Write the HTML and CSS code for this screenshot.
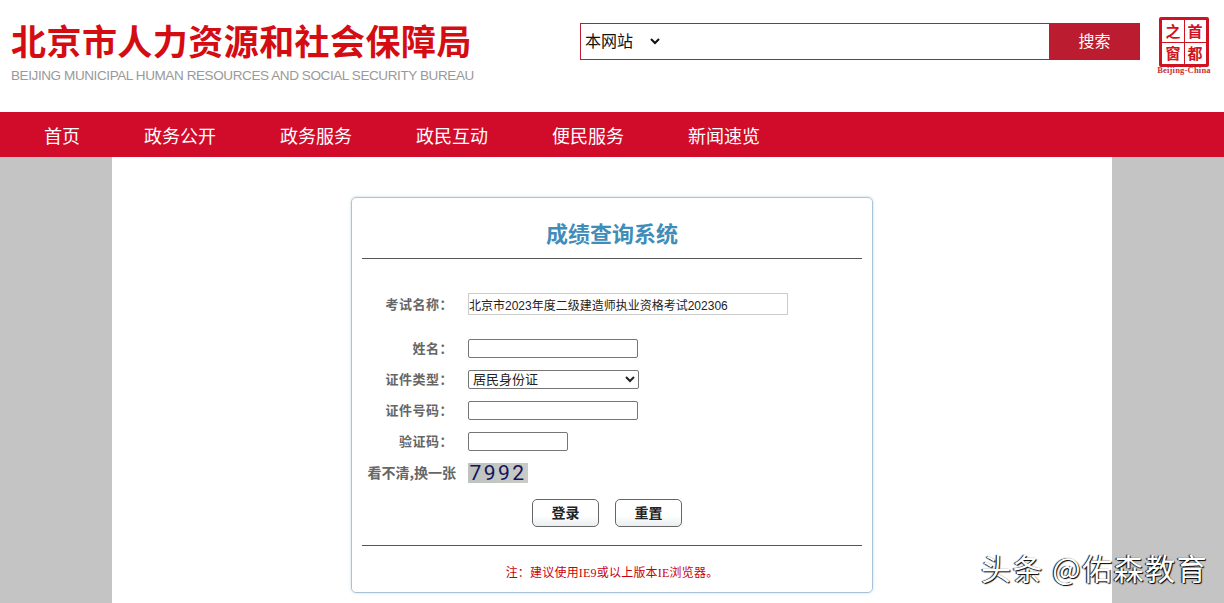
FILE: index.html
```html
<!DOCTYPE html>
<html lang="zh-CN">
  <head>
    <meta charset="UTF-8" />
    <title>成绩查询系统</title>
    <link rel="stylesheet" href="styles.css">
  </head>
  <body>
    <header class="top">
      <div class="brand">
        <div class="brand-cn">北京市人力资源和社会保障局</div>
        <div class="brand-en">BEIJING MUNICIPAL HUMAN RESOURCES AND SOCIAL SECURITY BUREAU</div>
      </div>
      <form class="search">
        <select class="search-scope">
          <option>本网站</option>
        </select>
        <input class="search-input" type="text" />
        <button class="search-btn" type="button">搜索</button>
      </form>
      <div class="seal">
        <div class="seal-box">
          <span>之</span><span>首</span><span>窗</span><span>都</span>
        </div>
        <div class="seal-en">Beijing-China</div>
      </div>
    </header>

    <nav class="nav">
      <a href="#">首页</a>
      <a href="#">政务公开</a>
      <a href="#">政务服务</a>
      <a href="#">政民互动</a>
      <a href="#">便民服务</a>
      <a href="#">新闻速览</a>
    </nav>

    <main class="page">
      <div class="column">
        <section class="card">
          <h1 class="card-title">成绩查询系统</h1>
          <form class="query">
            <div class="row row-exam">
              <label>考试名称：</label>
              <input class="exam-name" type="text" value="北京市2023年度二级建造师执业资格考试202306" readonly />
            </div>
            <div class="row">
              <label>姓名：</label>
              <input class="field" type="text" />
            </div>
            <div class="row">
              <label>证件类型：</label>
              <select class="field-select">
                <option>居民身份证</option>
              </select>
            </div>
            <div class="row">
              <label>证件号码：</label>
              <input class="field" type="text" />
            </div>
            <div class="row">
              <label>验证码：</label>
              <input class="field field-short" type="text" />
            </div>
            <div class="row row-captcha">
              <label class="refresh">看不清,换一张</label>
              <span class="captcha">7992</span>
            </div>
            <div class="actions">
              <button type="button">登录</button>
              <button type="reset">重置</button>
            </div>
          </form>
          <p class="note">注：建议使用IE9或以上版本IE浏览器。</p>
        </section>
      </div>
    </main>

    <div class="watermark">头条 @佑森教育</div>
  </body>
</html>
```

FILE: styles.css
```css
html,
body {
  margin: 0;
  height: 603px;
  overflow: hidden;
}
body {
  font-family: "Noto Sans CJK SC", "Liberation Sans", sans-serif;
  background: #fff;
}

/* header */
.top {
  display: flex;
  height: 112px;
  box-sizing: border-box;
  padding-left: 11px;
}
.brand {
  width: 569px;
  padding-top: 19px;
}
.brand-cn {
  font-size: 35px;
  line-height: 42px;
  font-weight: 700;
  color: #d40d12;
  letter-spacing: 0.45px;
  white-space: nowrap;
}
.brand-en {
  margin-top: 6px;
  font-family: "Liberation Sans", sans-serif;
  font-size: 13.5px;
  line-height: 18px;
  letter-spacing: -0.4px;
  color: #999;
  white-space: nowrap;
}
.search {
  display: flex;
  width: 560px;
  height: 37px;
  margin-top: 23px;
  box-sizing: border-box;
  border: 1px solid #bb1c2f;
  border-right: none;
}
.search-scope {
  width: 82px;
  border: none;
  background: #fff;
  font-family: "Liberation Sans", "Noto Sans CJK SC", sans-serif;
  font-size: 16px;
  color: #111;
  padding: 0;
  outline: none;
}
.search-input {
  flex: 1;
  border: none;
  outline: none;
  min-width: 0;
}
.search-btn {
  width: 91px;
  margin: -1px 0;
  padding: 0 0 4px;
  border: none;
  background: #bb1c2f;
  color: #fff;
  font-size: 16px;
  font-family: inherit;
}
.seal {
  width: 60px;
  margin-left: 14px;
  margin-top: 17px;
  text-align: center;
}
.seal-box {
  display: grid;
  grid-template-columns: 1fr 1fr;
  width: 50px;
  height: 50px;
  margin: 0 auto;
  box-sizing: border-box;
  border: 3px solid #cf1322;
  border-radius: 2px;
  background: linear-gradient(#cf1322, #cf1322) center / 1px 100% no-repeat,
    linear-gradient(#cf1322, #cf1322) center / 100% 1px no-repeat, #fff;
}
.seal-box span {
  font-size: 15px;
  line-height: 22px;
  font-weight: 700;
  color: #cf1322;
  text-align: center;
}
.seal-en {
  font-family: "Liberation Serif", serif;
  font-size: 8.5px;
  line-height: 7px;
  letter-spacing: 0.2px;
  font-weight: 700;
  color: #c9303a;
  white-space: nowrap;
}

/* nav */
.nav {
  display: flex;
  height: 45px;
  padding-left: 12px;
  background: #d10c2a;
}
.nav a {
  padding: 0 32px;
  font-size: 18px;
  line-height: 47px;
  color: #fff;
  text-decoration: none;
}

/* main */
.page {
  height: 446px;
  background: #c4c4c4;
}
.column {
  width: 1000px;
  height: 100%;
  margin: 0 auto;
  box-sizing: border-box;
  padding-top: 40px;
  background: #fff;
}
.card {
  width: 522px;
  height: 396px;
  margin-left: 239px;
  box-sizing: border-box;
  padding: 0 10px;
  border: 1px solid #a9c4da;
  border-radius: 5px;
  box-shadow: 0 0 3px #c6d6e3;
}
.card-title {
  height: 60px;
  margin: 0;
  border-bottom: 1px solid #555;
  font-size: 22px;
  line-height: 68px;
  font-weight: 700;
  color: #3f8db8;
  text-align: center;
}
.query {
  height: 287px;
  box-sizing: border-box;
  padding-top: 34px;
  border-bottom: 1px solid #555;
}
.row {
  display: flex;
  align-items: center;
  height: 19px;
  margin-bottom: 12px;
}
.row label {
  width: 91px;
  margin-right: 15px;
  padding-bottom: 2px;
  font-size: 13px;
  font-weight: 700;
  letter-spacing: 0.5px;
  color: #666;
  text-align: right;
  white-space: nowrap;
}
.row-exam {
  height: 22px;
  margin-bottom: 24px;
}
.exam-name {
  width: 320px;
  height: 22px;
  box-sizing: border-box;
  padding: 0;
  border: 1px solid #ccc;
  font-family: "Liberation Sans", "Noto Sans CJK SC", sans-serif;
  font-size: 12px;
  color: #222;
  outline: none;
}
.field {
  width: 170px;
  height: 19px;
  box-sizing: border-box;
  padding: 0 2px;
  border: 1px solid #767676;
  border-radius: 2px;
}
.field-short {
  width: 100px;
}
.field-select {
  width: 171px;
  height: 19px;
  box-sizing: border-box;
  padding: 0;
  border: 1px solid #767676;
  border-radius: 2px;
  background: #fff;
  font-family: "Liberation Sans", "Noto Sans CJK SC", sans-serif;
  font-size: 13px;
  color: #222;
}
.row-captcha {
  height: 20px;
  margin-bottom: 16px;
}
.row-captcha .refresh {
  width: 94px;
  margin-right: 12px;
  font-size: 14px;
  letter-spacing: 0;
}
.captcha {
  width: 60px;
  height: 20px;
  background: linear-gradient(90deg, #bfc3bf, #c8cbc6);
  font-family: Roboto, "Liberation Sans", sans-serif;
  font-size: 21px;
  line-height: 20px;
  font-weight: 400;
  letter-spacing: 2.5px;
  color: #14145c;
  text-align: center;
}
.actions {
  display: flex;
  justify-content: center;
  gap: 16px;
  padding-right: 10px;
}
.actions button {
  width: 67px;
  height: 28px;
  padding: 0 0 2px;
  border: 1px solid #666;
  border-radius: 5px;
  background: linear-gradient(#fff 60%, #e9eef0);
  font-family: inherit;
  font-size: 14px;
  font-weight: 700;
  color: #222;
}
.note {
  margin: 0;
  font-family: "Liberation Serif", "Noto Sans CJK SC", serif;
  font-size: 12px;
  line-height: 55px;
  letter-spacing: 0.2px;
  color: #c8000a;
  text-align: center;
}

/* overlay from the screenshot source */
.watermark {
  position: absolute;
  left: 981px;
  top: 546px;
  font-size: 30px;
  line-height: 42px;
  letter-spacing: 1.5px;
  color: #fff;
  text-shadow: 1px 1px 1px #000, -1px 0 1px #000;
  white-space: nowrap;
}
```
